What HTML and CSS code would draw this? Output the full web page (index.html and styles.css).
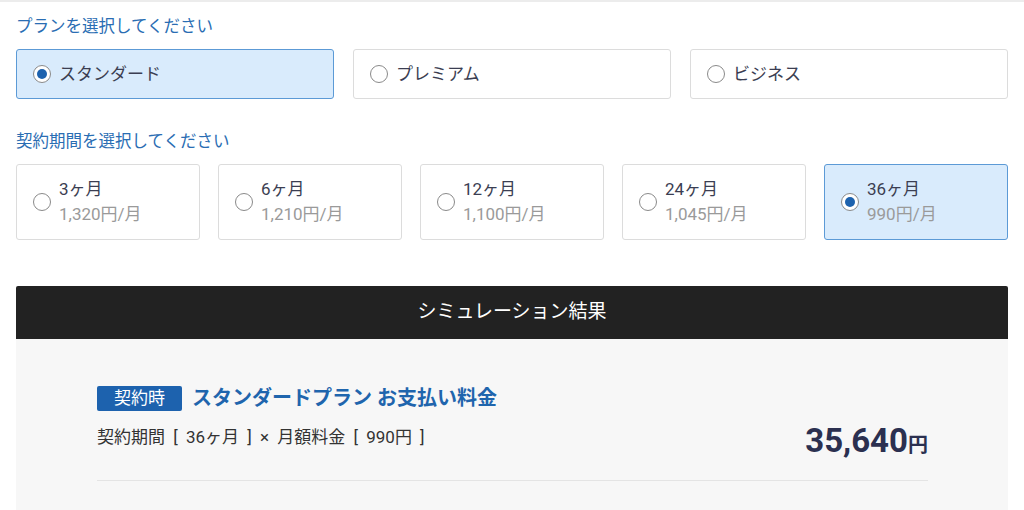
FILE: index.html
```html
<!DOCTYPE html>
<html lang="ja">
<head>
<meta charset="UTF-8">
<meta name="viewport" content="width=device-width, initial-scale=1.0">
<title>料金シミュレーション</title>
<link rel="stylesheet" href="styles.css">
</head>
<body>
    <div class="section">
        <h2 class="section-title">プランを選択してください</h2>
        <div class="plan-list">
            <label class="option plan selected"><span class="radio"></span><span class="option-name">スタンダード</span></label>
            <label class="option plan"><span class="radio"></span><span class="option-name">プレミアム</span></label>
            <label class="option plan"><span class="radio"></span><span class="option-name">ビジネス</span></label>
        </div>
    </div>

    <div class="section">
        <h2 class="section-title">契約期間を選択してください</h2>
        <div class="term-list">
            <label class="option term"><span class="radio"></span><span class="term-text"><span class="option-name">3ヶ月</span><span class="term-price">1,320円/月</span></span></label>
            <label class="option term"><span class="radio"></span><span class="term-text"><span class="option-name">6ヶ月</span><span class="term-price">1,210円/月</span></span></label>
            <label class="option term"><span class="radio"></span><span class="term-text"><span class="option-name">12ヶ月</span><span class="term-price">1,100円/月</span></span></label>
            <label class="option term"><span class="radio"></span><span class="term-text"><span class="option-name">24ヶ月</span><span class="term-price">1,045円/月</span></span></label>
            <label class="option term selected"><span class="radio"></span><span class="term-text"><span class="option-name">36ヶ月</span><span class="term-price">990円/月</span></span></label>
        </div>
    </div>

    <div class="result">
        <div class="result-head">シミュレーション結果</div>
        <div class="result-body">
            <div class="result-row">
                <div class="result-info">
                    <div class="result-title"><span class="badge">契約時</span>スタンダードプラン お支払い料金</div>
                    <div class="result-detail">契約期間 [ 36ヶ月 ] × 月額料金 [ 990円 ]</div>
                </div>
                <div class="result-price">35,640<span class="yen">円</span></div>
            </div>
        </div>
    </div>
</body>
</html>
```

FILE: styles.css
```css
body {
    font-family: Roboto, "Noto Sans CJK JP", sans-serif;
    color: #3b3e52;
    background-color: #fff;
    margin: 0;
    padding: 14px 16px 0;
    border-top: 2px solid #ececec;
}
.section-title {
    margin: 0 0 11px;
    font-size: 16.5px;
    line-height: 22px;
    font-weight: normal;
    color: #2a6db3;
}
.section + .section {
    margin-top: 32px;
}
.section + .section .section-title {
    margin-bottom: 11px;
}
.plan-list {
    display: grid;
    grid-template-columns: repeat(3, 1fr);
    gap: 19px;
}
.term-list {
    display: grid;
    grid-template-columns: repeat(5, 1fr);
    gap: 18px;
}
.option {
    display: flex;
    align-items: center;
    gap: 8px;
    border: 1px solid #dcdcdc;
    border-radius: 3px;
    background-color: #fff;
    padding: 0 16px;
    cursor: pointer;
}
.option.selected {
    background-color: #d9ebfc;
    border-color: #5c9ad6;
}
.plan {
    height: 48px;
}
.term {
    height: 74px;
}
.radio {
    width: 16px;
    height: 16px;
    border: 1.5px solid #8a8a8a;
    border-radius: 50%;
    background-color: #fff;
    flex-shrink: 0;
    display: flex;
    align-items: center;
    justify-content: center;
}
.selected .radio::after {
    content: "";
    width: 10px;
    height: 10px;
    border-radius: 50%;
    background-color: #1d62ae;
}
.option-name {
    font-size: 17px;
    line-height: 25px;
}
.term-text {
    display: flex;
    flex-direction: column;
    margin-top: -1px;
}
.term-price {
    font-size: 17px;
    line-height: 25px;
    color: #9a9a9a;
}
.result {
    margin-top: 46px;
}
.result-head {
    background-color: #222;
    color: #fff;
    text-align: center;
    font-size: 19px;
    height: 53px;
    line-height: 51px;
    border-radius: 2px 2px 0 0;
}
.result-body {
    background-color: #f7f7f7;
    padding: 46px 80px 0 81px;
    height: 180px;
    box-sizing: border-box;
}
.result-row {
    display: flex;
    align-items: flex-end;
    justify-content: space-between;
    padding-bottom: 32px;
    border-bottom: 1px solid #e4e4e4;
}
.result-title {
    display: flex;
    align-items: center;
    gap: 10px;
    font-size: 20px;
    font-weight: bold;
    color: #1f65ad;
    line-height: 26px;
}
.badge {
    background-color: #1d62ae;
    color: #fff;
    font-size: 17px;
    font-weight: normal;
    line-height: 25px;
    padding: 0 17px;
    border-radius: 2px;
}
.result-detail {
    margin-top: 15px;
    font-size: 17px;
    line-height: 22px;
    color: #333;
    word-spacing: 4px;
}
.result-price {
    font-size: 33px;
    font-weight: bold;
    color: #2b3050;
    line-height: 34px;
    margin-bottom: -14px;
}
.yen {
    font-size: 20px;
}
```
